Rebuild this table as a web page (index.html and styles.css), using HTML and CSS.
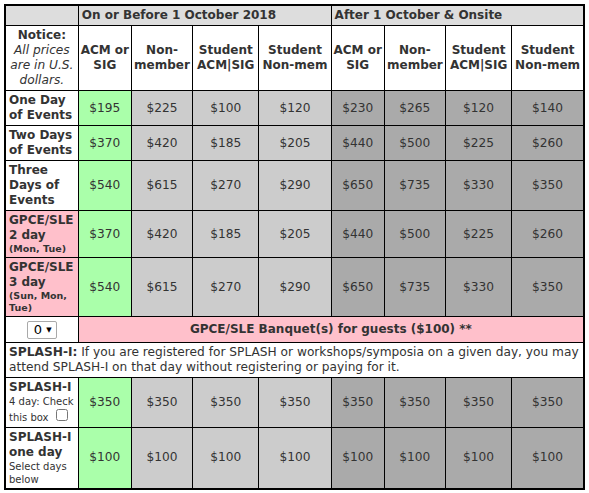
FILE: index.html
```html
<!DOCTYPE html>
<html>
<head>
<meta charset="utf-8">
<link rel="stylesheet" href="styles.css">
</head>
<body>
<table class="prices">
  <colgroup>
    <col class="c-label">
    <col class="c-acm"><col class="c-non"><col class="c-sacm"><col class="c-snon">
    <col class="c-acm"><col class="c-non"><col class="c-sacm"><col class="c-snon">
  </colgroup>
  <tr class="period">
    <th></th>
    <th colspan="4">On or Before 1 October 2018</th>
    <th colspan="4">After 1 October &amp; Onsite</th>
  </tr>
  <tr class="cats">
    <th class="notice">Notice:<br><i>All prices are in U.S. dollars.</i></th>
    <th>ACM or<br>SIG</th>
    <th>Non-<br>member</th>
    <th>Student<br>ACM|SIG</th>
    <th>Student<br>Non-mem</th>
    <th>ACM or<br>SIG</th>
    <th>Non-<br>member</th>
    <th>Student<br>ACM|SIG</th>
    <th>Student<br>Non-mem</th>
  </tr>
  <tr>
    <th class="lbl">One Day<br>of Events</th>
    <td class="g">$195</td><td class="l">$225</td><td class="l">$100</td><td class="l">$120</td>
    <td class="d">$230</td><td class="d">$265</td><td class="d">$120</td><td class="d">$140</td>
  </tr>
  <tr>
    <th class="lbl">Two Days<br>of Events</th>
    <td class="g">$370</td><td class="l">$420</td><td class="l">$185</td><td class="l">$205</td>
    <td class="d">$440</td><td class="d">$500</td><td class="d">$225</td><td class="d">$260</td>
  </tr>
  <tr>
    <th class="lbl">Three<br>Days of<br>Events</th>
    <td class="g">$540</td><td class="l">$615</td><td class="l">$270</td><td class="l">$290</td>
    <td class="d">$650</td><td class="d">$735</td><td class="d">$330</td><td class="d">$350</td>
  </tr>
  <tr>
    <th class="lbl pink">GPCE/SLE<br>2 day<span class="days">(Mon, Tue)</span></th>
    <td class="g">$370</td><td class="l">$420</td><td class="l">$185</td><td class="l">$205</td>
    <td class="d">$440</td><td class="d">$500</td><td class="d">$225</td><td class="d">$260</td>
  </tr>
  <tr>
    <th class="lbl pink">GPCE/SLE<br>3 day<span class="days">(Sun, Mon,<br>Tue)</span></th>
    <td class="g">$540</td><td class="l">$615</td><td class="l">$270</td><td class="l">$290</td>
    <td class="d">$650</td><td class="d">$735</td><td class="d">$330</td><td class="d">$350</td>
  </tr>
  <tr class="banquet">
    <td class="sel-cell"><span class="select"><span class="val">0</span><span class="arrow">▼</span></span></td>
    <th colspan="8" class="pink">GPCE/SLE Banquet(s) for guests ($100) **</th>
  </tr>
  <tr>
    <td colspan="9" class="info"><b>SPLASH-I:</b> If you are registered for SPLASH or workshops/symposia on a given day, you may attend SPLASH-I on that day without registering or paying for it.</td>
  </tr>
  <tr class="splash4">
    <th class="lbl">SPLASH-I<span class="small">4 day: Check<br>this box <input type="checkbox"></span></th>
    <td class="g">$350</td><td class="l">$350</td><td class="l">$350</td><td class="l">$350</td>
    <td class="d">$350</td><td class="d">$350</td><td class="d">$350</td><td class="d">$350</td>
  </tr>
  <tr>
    <th class="lbl">SPLASH-I<br>one day<span class="small">Select days<br>below</span></th>
    <td class="g">$100</td><td class="l">$100</td><td class="l">$100</td><td class="l">$100</td>
    <td class="d">$100</td><td class="d">$100</td><td class="d">$100</td><td class="d">$100</td>
  </tr>
</table>
</body>
</html>
```

FILE: styles.css
```css
html, body {
  margin: 0;
  padding: 0;
  background: #fff;
}
body {
  padding: 4px;
  font-family: "DejaVu Sans", Verdana, sans-serif;
  font-size: 12.2px;
  line-height: 15px;
  color: #333;
}
.prices {
  border-collapse: collapse;
  border: 2px solid #000;
  table-layout: fixed;
  width: 581px;
}
.c-label { width: 73px; }
.c-acm { width: 53px; }
.c-non { width: 61px; }
.c-sacm { width: 66px; }
.c-snon { width: 72px; }
.prices th, .prices td {
  border: 1px solid #000;
  padding: 2px 3px;
  vertical-align: middle;
}
.prices th {
  font-weight: bold;
  font-size: 12px;
}
.period th {
  background: #ddd;
  text-align: left;
  padding: 2px 3px;
  height: 15px;
}
.cats th {
  background: #fff;
  text-align: center;
  padding: 2px 0;
  height: 60px;
}
.notice i {
  font-weight: normal;
  font-size: 12.2px;
}
.lbl {
  text-align: left;
  background: #fff;
  padding: 2px 2px 2px 3px;
}
.lbl.pink, .pink {
  background: #ffc0cb;
}
.days {
  display: block;
  font-size: 9.5px;
  line-height: 12px;
}
.prices td {
  text-align: center;
}
.g { background: #aaffaa; }
.l { background: #ccc; }
.d { background: #aaa; }
.banquet th {
  text-align: center;
  padding: 2px 3px;
}
.sel-cell {
  background: #fff;
  text-align: center;
  padding: 3px 0 !important;
  line-height: 18px;
}
.select {
  display: inline-flex;
  align-items: center;
  vertical-align: middle;
  box-sizing: border-box;
  border: 1px solid #a9a9a9;
  border-radius: 2px;
  padding: 0 4px 0 6px;
  gap: 4px;
  height: 18px;
  width: 30px;
  font-size: 13px;
  line-height: 16px;
  color: #000;
  background: #fff;
}
.arrow {
  font-size: 7px;
  line-height: 8px;
}
.info {
  text-align: left !important;
  background: #fff;
  padding: 2px 3px;
}
.small {
  display: block;
  font-size: 10px;
  font-weight: normal;
  line-height: 13px;
  white-space: nowrap;
}
.splash4 .small {
  line-height: 14px;
}
.splash4 input {
  width: 12px;
  height: 12px;
  margin: 0 3px 2px 4px;
  vertical-align: baseline;
}
```
